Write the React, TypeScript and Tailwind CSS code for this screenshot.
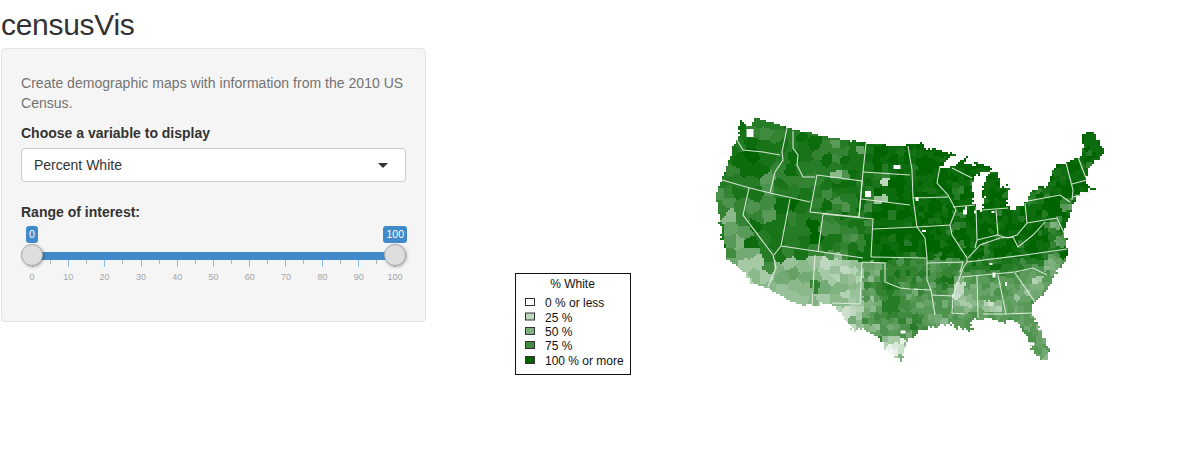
const OUTLINE = [
  [740, 119], [745, 125], [752, 127], [755, 117], [787, 128], [833, 138], [867, 143], [900, 146], [922, 143], [923, 147],
  [940, 151], [955, 153], [943, 165], [939, 170], [952, 167], [966, 158], [964, 164], [980, 164], [993, 168], [990, 171],
  [977, 174], [972, 187], [975, 210], [982, 212], [984, 196], [982, 188], [988, 172], [998, 173], [1002, 188], [1008, 186],
  [1008, 200], [1008, 208], [1012, 210], [1018, 208], [1026, 203], [1032, 190], [1048, 185], [1053, 167], [1066, 163], [1077, 158],
  [1082, 155], [1083, 134], [1093, 131], [1105, 152], [1097, 160], [1087, 170], [1087, 185], [1097, 188], [1077, 195], [1072, 205],
  [1070, 217], [1063, 228], [1066, 238], [1068, 255], [1057, 272], [1047, 292], [1033, 303], [1032, 313], [1043, 335], [1049, 350],
  [1047, 363], [1033, 352], [1028, 338], [1015, 320], [1003, 322], [990, 318], [972, 320], [972, 332], [957, 328], [950, 323],
  [935, 327], [920, 330], [907, 342], [902, 362], [887, 352], [880, 338], [863, 328], [855, 332], [847, 322], [832, 303],
  [812, 306], [792, 302], [768, 287], [750, 285], [747, 275], [727, 258], [725, 248], [722, 237], [716, 197], [722, 180],
  [733, 145], [738, 140],
];

const STATE_LINES = [
  '737,140 743,150 763,152 780,155', '787,128 782,152 783,160 775,172 770,193', '722,180 750,188 770,193 810,202',
  '793,131 793,148 798,155 797,165 803,177 815,177', '817,175 862,181 859,217 810,212 817,175', '866,143 863,172 859,217',
  '863,172 910,175', '861,199 910,205', '823,214 873,219 871,257', '873,229 917,227', '790,199 781,246', '823,214 818,252',
  '749,188 743,215 773,255 776,268 768,287', '781,246 774,255', '781,246 863,258', '815,255 812,306',
  '862,262 860,304 832,303', '862,262 885,263 885,282 900,288 910,289 931,290', '871,257 927,258', '908,146 912,170 913,198 917,227 925,238 927,258 927,280 931,290 935,315',
  '913,198 948,197', '940,166 937,183 948,195 956,210 950,225 917,227', '952,168 972,178', '953,207 975,205', '976,207 977,240 975,248',
  '996,210 998,235', '982,210 1008,208', '1025,203 1027,223 1017,235 1008,238 997,235 985,238 977,240', '1028,201 1060,195 1070,202',
  '1027,223 1057,218', '1066,163 1073,190 1072,200', '1078,157 1086,178', '1072,184 1087,180', '1073,197 1090,192',
  '967,262 1025,255 1067,249', '927,263 963,262 960,272', '950,225 952,235 967,258 967,262 963,268 953,296 952,313 965,314',
  '932,295 953,296', '962,277 1015,272', '977,276 978,318', '998,275 1006,314 1032,313', '983,314 1006,314',
  '1015,273 1035,302', '1015,272 1033,268 1047,275', '968,258 980,245 1000,238 1013,237 1018,247 1033,235 1045,222', '1057,218 1065,235',
];

// cx, cy, rx, ry, share of white-population shade
const BLOBS = [
  [990, 264, 34, 9, 0.93], [945, 278, 14, 13, 0.86], [900, 272, 26, 11, 0.86], [1030, 262, 16, 6, 0.82],
  [765, 135, 12, 8, 0.62], [768, 182, 4, 11, 0.5], [748, 205, 18, 15, 0.76], [768, 215, 10, 9, 0.68],
  [792, 222, 14, 16, 0.9], [800, 185, 9, 6, 0.78], [835, 195, 18, 14, 0.86], [835, 226, 12, 7, 0.66], [855, 232, 12, 9, 0.8],
  [810, 137, 5, 3, 0.42], [835, 145, 4, 5, 0.58], [840, 173, 5, 5, 0.3], [858, 148, 6, 3, 0.6],
  [882, 180, 6, 6, 0.22], [880, 198, 7, 4, 0.3],
  [724, 200, 7, 14, 0.72], [727, 222, 8, 11, 0.46], [727, 248, 4, 5, 0.66], [738, 238, 8, 11, 0.38], [745, 262, 11, 13, 0.3], [755, 282, 8, 5, 0.1],
  [785, 272, 14, 13, 0.5], [771, 262, 4, 10, 0.82], [790, 292, 13, 10, 0.42], [808, 262, 4, 13, 0.28],
  [840, 272, 16, 16, 0.4], [822, 267, 7, 6, 0.12], [835, 258, 6, 3, 0.12], [848, 269, 6, 5, 0.18], [818, 282, 5, 6, 0.78],
  [872, 272, 9, 10, 0.54], [888, 296, 14, 13, 0.86], [908, 300, 12, 16, 0.72], [870, 305, 9, 9, 0.48], [846, 313, 15, 10, 0.22], [852, 320, 4, 4, 0.62],
  [872, 328, 11, 7, 0.4], [895, 325, 10, 5, 0.66], [893, 348, 13, 13, 0.05], [908, 334, 4, 5, 0.5], [900, 338, 5, 3, 0.28],
  [925, 305, 9, 14, 0.58], [938, 321, 12, 7, 0.5], [957, 292, 6, 14, 0.18], [968, 302, 8, 14, 0.45], [990, 306, 12, 7, 0.3],
  [990, 289, 10, 8, 0.62], [1015, 297, 14, 16, 0.58], [1035, 285, 10, 12, 0.44], [1052, 262, 8, 11, 0.5], [1058, 240, 8, 8, 0.58],
  [1053, 225, 7, 6, 0.52], [1067, 205, 5, 6, 0.6], [1022, 322, 10, 6, 0.62], [1040, 342, 8, 14, 0.55], [1047, 361, 4, 4, 0.2],
];

// counties with no data, left blank in the plot
const BLANK = [
  [750, 133, 7, 8], [897, 167, 7, 4], [868, 194, 6, 6], [917, 199, 3, 4], [924, 231, 4, 2], [966, 208, 2, 3], [965, 212, 4, 5], [975, 212, 2, 3], [993, 212, 3, 2],
  [991, 264, 3, 2], [994, 275, 3, 5], [903, 332, 5, 3], [1006, 284, 2, 4], [1032, 344, 5, 3],
];

function rng(seed: number) {
  return () => {
    seed = (seed + 0x6d2b79f5) | 0;
    let t = Math.imul(seed ^ (seed >>> 15), 1 | seed);
    t = (t + Math.imul(t ^ (t >>> 7), 61 | t)) ^ t;
    return ((t ^ (t >>> 14)) >>> 0) / 4294967296;
  };
}

function inside(x: number, y: number) {
  let hit = false;
  for (let i = 0, j = OUTLINE.length - 1; i < OUTLINE.length; j = i++) {
    const [xi, yi] = OUTLINE[i];
    const [xj, yj] = OUTLINE[j];
    if (yi > y !== yj > y && x < ((xj - xi) * (y - yi)) / (yj - yi) + xi) hit = !hit;
  }
  return hit;
}

// rough coastline: nudge the test point a little, less along the straight northern border
function insideRough(x: number, y: number) {
  const amp = y < 150 && x < 925 ? 0.4 : 1.1;
  const jx = amp * (Math.sin(x * 0.9 + y * 0.37) + 0.6 * Math.sin(y * 1.7 - x * 0.5));
  const jy = amp * (Math.cos(y * 0.8 - x * 0.41) + 0.6 * Math.sin(x * 1.9 + y * 0.6));
  return inside(x + jx, y + jy);
}

function baseShade(x: number, y: number) {
  if (y > 258) {
    if (x < 860) return 0.45;
    if (x < 930) return 0.78;
    return 0.68;
  }
  if (x < 870) return 0.9;
  return 0.98;
}

function shade(x: number, y: number) {
  let v = baseShade(x, y);
  for (const [cx, cy, rx, ry, val] of BLOBS) {
    const d = ((x - cx) / rx) ** 2 + ((y - cy) / ry) ** 2;
    const w = Math.exp(-(d ** 1.5));
    v = v * (1 - w) + val * w;
  }
  return v;
}

function cellSize(x: number, y: number) {
  if (x < 835) return 12;
  if (x > 855 && y > 262) return 6;
  if (x < 905) return 8;
  return 6;
}

function buildCounties() {
  const rand = rng(2010);
  const seeds: { x: number; y: number; level: number }[] = [];
  for (const cell of [12, 8, 6]) {
    for (let gx = 712; gx < 1112; gx += cell) {
      for (let gy = 114; gy < 366; gy += cell) {
        const j = cell > 8 ? 0.8 : 0.35;
        const x = gx + cell / 2 + (rand() - 0.5) * cell * j;
        const y = gy + cell / 2 + (rand() - 0.5) * cell * j;
        if (cellSize(x, y) !== cell) continue;
        let v = shade(x, y) + (rand() - 0.5) * (cell > 8 ? 0.2 : 0.12);
        if (cell < 12 && rand() < 0.12) v -= 0.13;
        seeds.push({ x, y, level: Math.round(Math.min(1, Math.max(0, v)) * 20) });
      }
    }
  }
  const paths: string[] = Array(21).fill('');
  for (let y = 114; y < 366; y += 2) {
    let runStart = 712;
    let runLevel = -1;
    for (let x = 712; x <= 1112; x += 2) {
      let level = -1;
      if (x < 1112 && insideRough(x + 1, y + 1)) {
        let best = 1e9;
        for (const s of seeds) {
          const d = (s.x - x) ** 2 + (s.y - y) ** 2;
          if (d < best) {
            best = d;
            level = s.level;
          }
        }
      }
      if (level !== runLevel) {
        if (runLevel >= 0) paths[runLevel] += `M${runStart} ${y}h${x - runStart}v2h-${x - runStart}z`;
        runStart = x;
        runLevel = level;
      }
    }
  }
  return paths;
}

const COUNTY_PATHS = buildCounties();

function levelColor(level: number) {
  const v = level / 20;
  const rb = Math.round(255 * (1 - v));
  const g = Math.round(255 - 155 * v);
  return `rgb(${rb},${g},${rb})`;
}

const LEGEND = [
  { label: '0 % or less', fill: '#ffffff', y: 298 },
  { label: '25 %', fill: '#bfd8bf', y: 312.5 },
  { label: '50 %', fill: '#7fb17f', y: 327 },
  { label: '75 %', fill: '#408b40', y: 341 },
  { label: '100 % or more', fill: '#006400', y: 356 },
];

function Plot() {
  return (
    <svg viewBox="426 48 766 400" className="h-[400px] w-full" style={{ fontFamily: '"Liberation Sans", Arial, sans-serif' }}>
      {COUNTY_PATHS.map((d, level) => d && <path key={level} d={d} fill={levelColor(level)} shapeRendering="crispEdges" />)}
      {BLANK.map(([cx, cy, rx, ry]) => (
        <rect key={`${cx}-${cy}`} x={cx - rx / 2} y={cy - ry / 2} width={rx} height={ry} fill="#fff" />
      ))}
      {STATE_LINES.map((points) => (
        <polyline key={points} points={points} fill="none" stroke="#e6f0e6" strokeWidth="1.1" opacity="0.9" />
      ))}
      <rect x="515.5" y="273.5" width="115" height="101" fill="#fff" stroke="#111" />
      <text x="572.5" y="288" textAnchor="middle" fontSize="12" fill="#111">% White</text>
      {LEGEND.map((row) => (
        <g key={row.label}>
          <rect x={525.5} y={row.y + 0.5} width="9" height="7" fill={row.fill} stroke="#333" />
          <text x="545" y={row.y + 9} fontSize="12" fill="#111">{row.label}</text>
        </g>
      ))}
    </svg>
  );
}

const STEPS = Array.from({ length: 21 }, (_, i) => i * 5);

function RangeSlider() {
  return (
    <div className="mt-1 w-full">
      <div className="-mr-px flex h-[18px] items-start justify-between pl-[5px]">
        <span className="h-[17px] rounded-[3px] bg-[#428bca] px-[3px] text-[10.5px] leading-[17px] text-white">0</span>
        <span className="h-[17px] rounded-[3px] bg-[#428bca] px-[3px] text-[10.5px] leading-[17px] text-white">100</span>
      </div>
      <div className="flex h-[22px] items-center">
        <div className="relative z-10 size-[22px] shrink-0 rounded-full border border-[#ababab] bg-[#dedede] shadow-[1px_1px_3px_rgba(0,0,0,0.3)]" />
        <div className="-mx-[11px] mt-[2px] h-2 flex-1 bg-[#428bca]" />
        <div className="relative z-10 size-[22px] shrink-0 rounded-full border border-[#ababab] bg-[#dedede] shadow-[1px_1px_3px_rgba(0,0,0,0.3)]" />
      </div>
      <div className="-mt-[6px] flex h-[12px] items-start justify-between px-[11px]">
        {STEPS.map((v) => (
          <div key={v} className={v % 10 === 0 ? 'h-[7px] w-px bg-[#8db9e0]' : 'h-[4px] w-px bg-[#b5b5b5]'} />
        ))}
      </div>
      <div className="flex justify-between px-[11px]">
        {STEPS.filter((v) => v % 10 === 0).map((v) => (
          <span key={v} className="flex w-0 justify-center text-[9px] leading-[10px] text-[#a6a6a6]">
            {v}
          </span>
        ))}
      </div>
    </div>
  );
}

export default function App() {
  return (
    <div className="w-full font-['Liberation_Sans',Arial,sans-serif] text-sm leading-5 text-[#333]">
      <h2 className="ml-px h-12 text-[30px] leading-[49px] tracking-[-0.3px]">censusVis</h2>
      <div className="flex items-start">
        <aside className="ml-px h-[274px] w-[425px] shrink-0 rounded border border-[#e3e3e3] bg-[#f5f5f5] px-[19px] pt-6">
          <p className="tracking-[0.03px] text-[#737373]">Create demographic maps with information from the 2010 US Census.</p>
          <label className="mt-[10px] block font-bold">Choose a variable to display</label>
          <div className="mt-[5px] flex h-[34px] items-center justify-between rounded border border-[#ccc] bg-white pl-3 pr-[17px]">
            <span>Percent White</span>
            <span className="h-0 w-0 border-x-[5px] border-t-[5px] border-x-transparent border-t-[#333]" />
          </div>
          <label className="mt-5 block font-bold">Range of interest:</label>
          <RangeSlider />
        </aside>
        <main className="min-w-0 flex-1">
          <Plot />
        </main>
      </div>
    </div>
  );
}
